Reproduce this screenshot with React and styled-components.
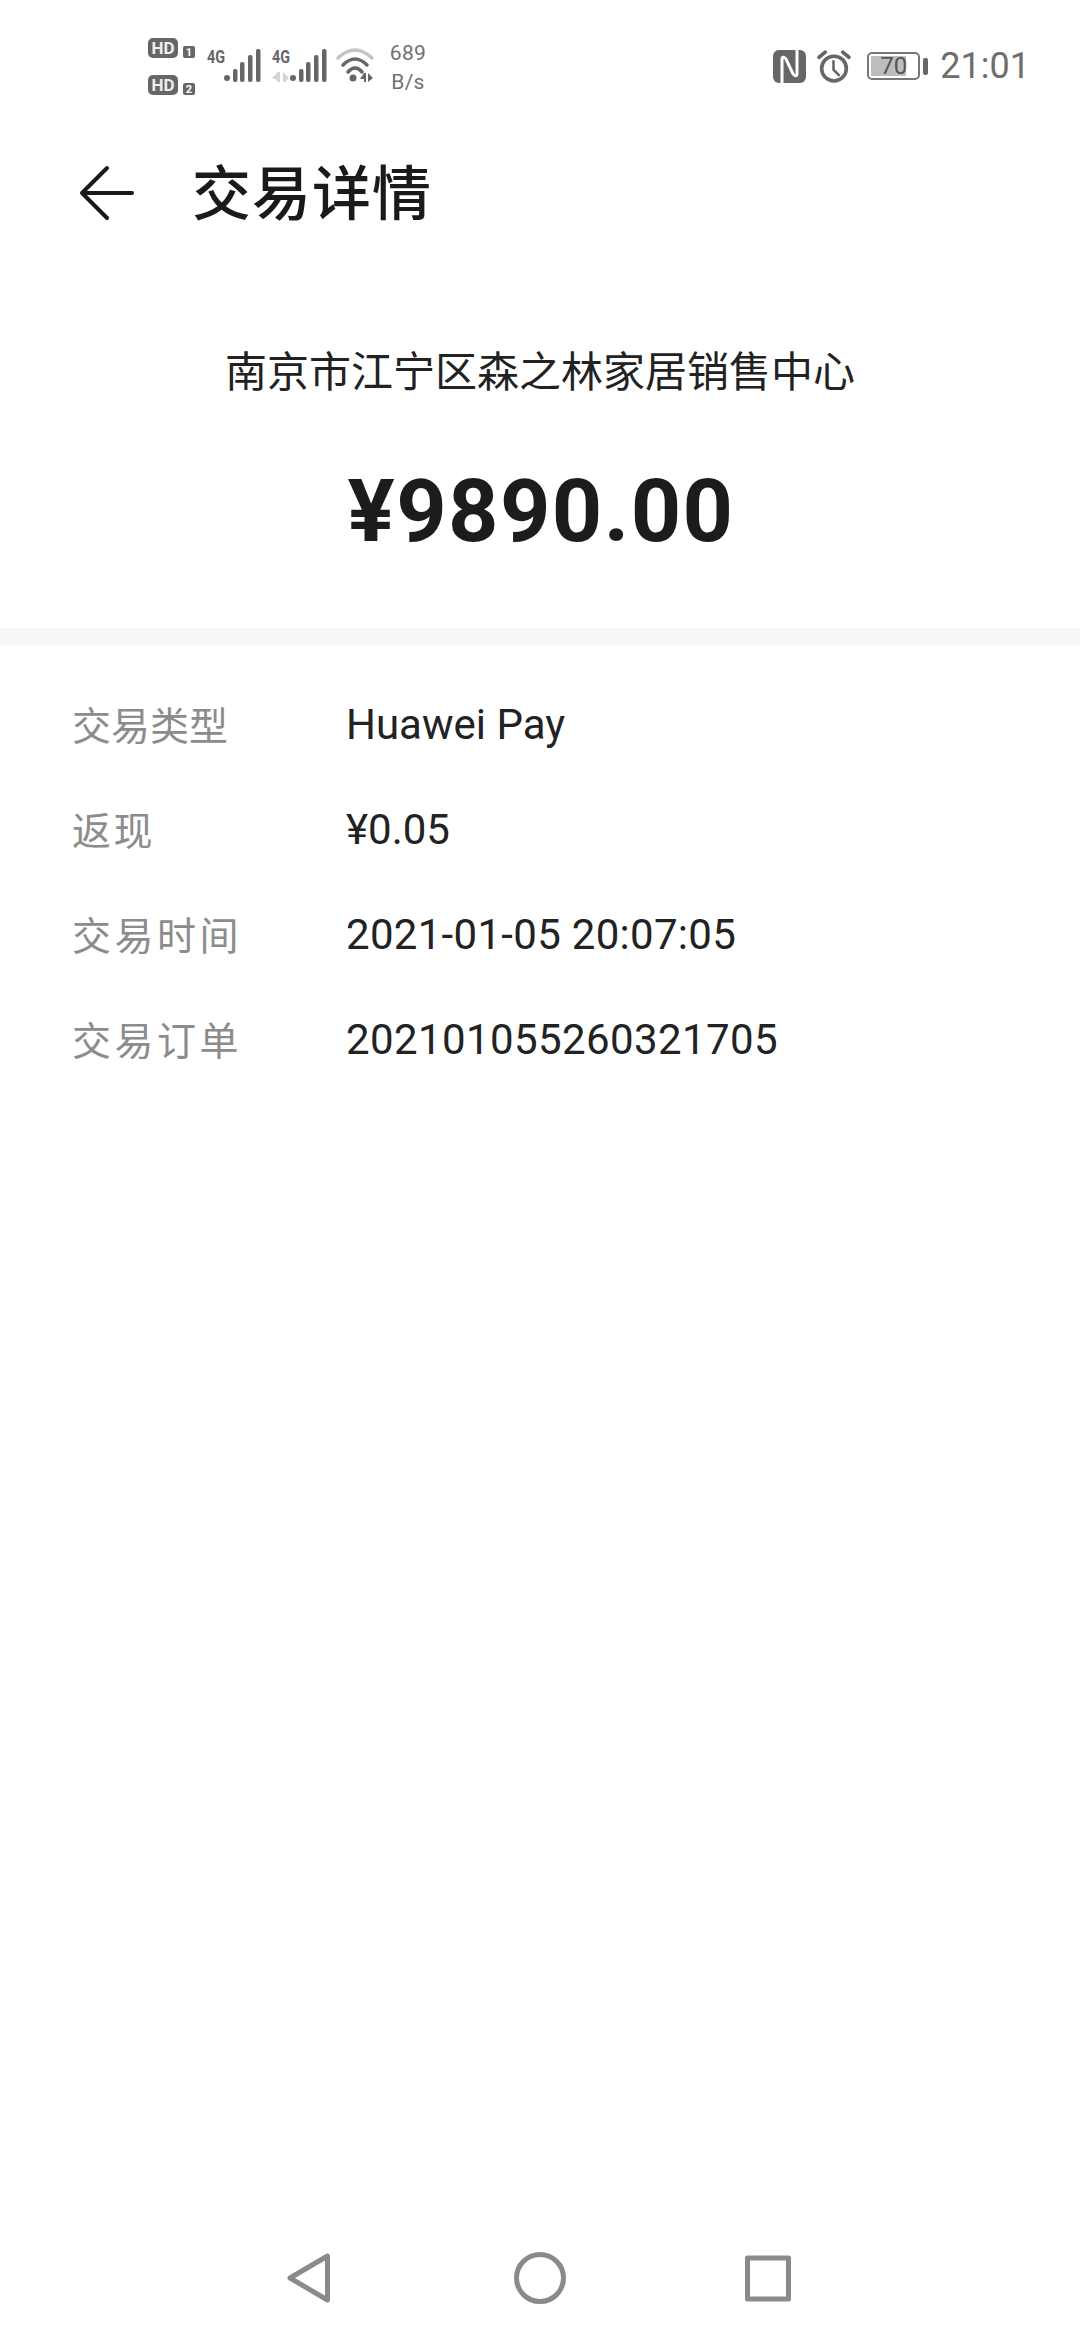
import React from "react";
import styled, { createGlobalStyle } from "styled-components";

const Global = createGlobalStyle`
  html, body { margin: 0; padding: 0; background: #fff; }
  * { box-sizing: border-box; }
`;

const FONT = `Roboto, "Noto Sans CJK SC", sans-serif`;

const Page = styled.div`
  width: 1080px;
  height: 2340px;
  display: flex;
  flex-direction: column;
  background: #fff;
  font-family: ${FONT};
  overflow: hidden;
`;

const StatusBar = styled.div`
  height: 144px;
  padding: 31px 50px 0 147px;
  display: flex;
  justify-content: space-between;
  align-items: flex-start;
  color: #666;
`;

const StatusGroup = styled.div`
  display: flex;
  align-items: center;
  height: 70px;
`;

const NetSpeed = styled.div`
  margin-top: 3px;
  width: 44px;
  font-size: 21px;
  line-height: 29px;
  text-align: center;
  color: #707070;
  letter-spacing: 0.3px;
`;

const BatteryBox = styled.div`
  position: relative;
  width: 53px;
  height: 28px;
  margin-left: 16px;
  border: 2px solid #777;
  border-radius: 5px;
  display: flex;
  align-items: center;
  justify-content: center;
  font-size: 24px;
  color: #555;
  overflow: hidden;
`;

const BatteryFill = styled.div`
  position: absolute;
  left: 2px;
  top: 2px;
  bottom: 2px;
  width: ${(p) => p.$level * 0.5}px;
  background: #bdbdbd;
`;

const BatteryText = styled.span`
  position: relative;
  line-height: 1;
`;

const BatteryTip = styled.div`
  width: 5px;
  height: 17px;
  margin-left: 3px;
  border-radius: 2px;
  background: #666;
`;

const Clock = styled.div`
  margin-left: 12px;
  font-size: 36px;
  color: #6e6e6e;
  line-height: 1;
`;

const Header = styled.div`
  height: 100px;
  padding-left: 79px;
  display: flex;
  align-items: center;
`;

const BackIcon = styled.svg`
  width: 56px;
  height: 56px;
  margin-bottom: 2px;
  display: block;
`;

const Title = styled.h1`
  margin: 0 0 0 57px;
  font-size: 59px;
  font-weight: 500;
  color: #1a1a1a;
  letter-spacing: 1px;
  line-height: 1;
`;

const Summary = styled.div`
  height: 384px;
  padding-top: 101px;
  display: flex;
  flex-direction: column;
  align-items: center;
`;

const Merchant = styled.div`
  font-size: 42px;
  line-height: 56px;
  color: #222;
`;

const Amount = styled.div`
  margin-top: 58px;
  margin-left: 2px;
  font-size: 88px;
  line-height: 104px;
  font-weight: 700;
  color: #1c1c1c;
  letter-spacing: 1.4px;
`;

const Divider = styled.div`
  height: 18px;
  background: #f7f7f7;
`;

const Details = styled.div`
  padding: 26px 0 0 72px;
  flex: 1;
`;

const Row = styled.div`
  height: 105px;
  display: flex;
  align-items: center;
`;

const Label = styled.div`
  width: 274px;
  margin-bottom: 4px;
  font-size: 39px;
  color: #8c8c8c;
  letter-spacing: ${(p) => p.$spacing}px;
`;

const Value = styled.div`
  font-size: 42px;
  color: #222;
  letter-spacing: ${(p) => p.$spacing}px;
`;

const NavBar = styled.div`
  height: 120px;
  display: flex;
  justify-content: center;
  align-items: flex-start;
  padding-top: 28px;
`;

const NavIcon = styled.svg`
  width: 60px;
  height: 60px;
  display: block;
  margin: 0 85px;
  fill: none;
  stroke: #8a8a8a;
  stroke-width: 5;
  stroke-linejoin: round;
`;

const LeftIcons = styled.svg`
  width: 239px;
  height: 70px;
  display: block;
`;

const NfcIcon = styled.svg`
  width: 33px;
  height: 33px;
  display: block;
`;

const AlarmIcon = styled.svg`
  width: 34px;
  height: 34px;
  margin-left: 11px;
  display: block;
`;

const rows = [
  { k: "交易类型", v: "Huawei Pay", ls: 0, vs: 0 },
  { k: "返现", v: "¥0.05", ls: 2.5, vs: 0 },
  { k: "交易时间", v: "2021-01-05 20:07:05", ls: 3.5, vs: 0.3 },
  { k: "交易订单", v: "202101055260321705", ls: 3.5, vs: 0.4 },
];

const Signal = ({ x }) => (
  <g fill="#666">
    <circle cx={x} cy={78} r={3} />
    <rect x={x + 6} y={69} width={4.5} height={13} rx={2} />
    <rect x={x + 13} y={62} width={4.5} height={20} rx={2} />
    <rect x={x + 21} y={55} width={4.5} height={27} rx={2} />
    <rect x={x + 29} y={49} width={4.5} height={33} rx={2} />
  </g>
);

const HdBadge = ({ y, n }) => (
  <g>
    <rect x={148} y={y} width={30} height={20} rx={5} fill="#666" />
    <text x={163} y={y + 16} textAnchor="middle" fontFamily="Roboto, sans-serif" fontWeight="700" fontSize="17" fill="#eee">HD</text>
    <rect x={183} y={y + 8} width={12} height={12} rx={2} fill="#666" />
    <text x={189} y={y + 18} textAnchor="middle" fontFamily="Roboto, sans-serif" fontWeight="700" fontSize="11" fill="#fff">{n}</text>
  </g>
);

const FourG = ({ x }) => (
  <text x={x} y={63} fontFamily="Roboto, sans-serif" fontWeight="700" fontSize="19" fill="#666" textLength="18" lengthAdjust="spacingAndGlyphs">4G</text>
);

const App = () => (
  <Page>
    <Global />
    <StatusBar>
      <StatusGroup>
        <LeftIcons viewBox="147 31 239 70">
          <HdBadge y={38} n="1" />
          <HdBadge y={75} n="2" />
          <FourG x={207} />
          <Signal x={227} />
          <FourG x={272} />
          <path d="M277 72 V82 H280 V72 Z M283 72 V82 H285 L289 78 L285 74 Z M272 78 L277 73 V80 Z" fill="#d4d4d4" />
          <Signal x={293} />
          <g fill="none" strokeLinecap="round">
            <path d="M338 58 Q355 42 372 58" stroke="#c4c4c4" strokeWidth="3.5" />
            <path d="M343 65 Q355 53 367 65" stroke="#666" strokeWidth="3.5" />
            <path d="M348 72 Q355 64 362 72" stroke="#666" strokeWidth="3.5" />
          </g>
          <circle cx={353} cy={78} r={3.5} fill="#666" />
          <path d="M364 73 L360 79 H364 V82 H366 V73 Z M368 73 V82 L373 78 Z" fill="#666" />
        </LeftIcons>
        <NetSpeed>689<br />B/s</NetSpeed>
      </StatusGroup>
      <StatusGroup>
        <NfcIcon viewBox="0 0 33 33">
          <rect width="33" height="33" rx="6" fill="#666" />
          <path d="M9 33 V10 Q9 5 13 9 L20 24 Q24 28 24 23 V0" stroke="#fff" strokeWidth="3" fill="none" />
        </NfcIcon>
        <AlarmIcon viewBox="0 0 33 33">
          <circle cx="16.5" cy="19" r="12" fill="none" stroke="#666" strokeWidth="3.5" />
          <path d="M16 11 V20 L22 26" fill="none" stroke="#666" strokeWidth="2.5" />
          <path d="M2 8 L8 3 M31 8 L25 3" stroke="#666" strokeWidth="3.5" strokeLinecap="round" />
        </AlarmIcon>
        <BatteryBox>
          <BatteryFill $level={70} />
          <BatteryText>70</BatteryText>
        </BatteryBox>
        <BatteryTip />
        <Clock>21:01</Clock>
      </StatusGroup>
    </StatusBar>
    <Header>
      <BackIcon viewBox="0 0 56 56">
        <path d="M53 28 H3 M28 3 L3 28 L28 53" fill="none" stroke="#1a1a1a" strokeWidth="4" strokeLinecap="round" strokeLinejoin="round" />
      </BackIcon>
      <Title>交易详情</Title>
    </Header>
    <Summary>
      <Merchant>南京市江宁区森之林家居销售中心</Merchant>
      <Amount>¥9890.00</Amount>
    </Summary>
    <Divider />
    <Details>
      {rows.map(({ k, v, ls, vs }) => (
        <Row key={k}>
          <Label $spacing={ls}>{k}</Label>
          <Value $spacing={vs}>{v}</Value>
        </Row>
      ))}
    </Details>
    <NavBar>
      <NavIcon viewBox="0 0 60 60">
        <path d="M47.5 8 V52 L10 30 Z" />
      </NavIcon>
      <NavIcon viewBox="0 0 60 60">
        <circle cx="30" cy="30" r="23.5" />
      </NavIcon>
      <NavIcon viewBox="0 0 60 60">
        <rect x="7.5" y="10" width="41" height="41" />
      </NavIcon>
    </NavBar>
  </Page>
);

export default App;
